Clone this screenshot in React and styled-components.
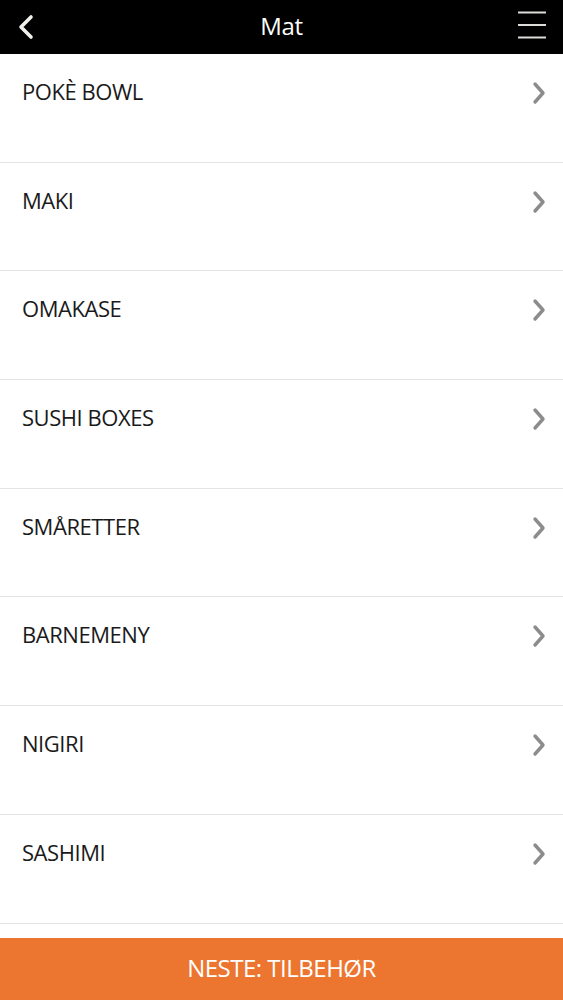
import React from "react";
import styled, { createGlobalStyle } from "styled-components";

const Global = createGlobalStyle`
  html, body { margin: 0; padding: 0; background: #fff; }
  body { font-family: "Open Sans", "Noto Sans", sans-serif; }
  * { box-sizing: border-box; }
`;

const Page = styled.div`
  width: 563px;
  height: 1000px;
  display: flex;
  flex-direction: column;
  overflow: hidden;
  background: #fff;
`;

const Header = styled.header`
  height: 54px;
  flex: 0 0 54px;
  background: #000;
  display: grid;
  grid-template-columns: 60px 1fr 60px;
  align-items: center;
`;

const Title = styled.h1`
  margin: 0;
  text-align: center;
  color: #fff;
  font-size: 24px;
  font-weight: 500;
  letter-spacing: -0.3px;
  padding-bottom: 3px;
`;

const IconButton = styled.button`
  background: none;
  border: 0;
  padding: 0;
  height: 54px;
  display: flex;
  align-items: center;
  justify-content: ${(p) => (p.$end ? "flex-end" : "flex-start")};
  padding-left: ${(p) => (p.$end ? "0" : "17px")};
  padding-right: ${(p) => (p.$end ? "16px" : "0")};
  padding-bottom: ${(p) => (p.$end ? "4px" : "0")};
`;

const List = styled.ul`
  list-style: none;
  margin: 0;
  padding: 0;
  flex: 1 1 auto;
  overflow: hidden;
`;

const Row = styled.li`
  height: 108.7px;
  flex: 0 0 auto;
  border-bottom: 1.5px solid #e4e4e4;
  display: flex;
  align-items: flex-start;
  justify-content: space-between;
  padding: 22px 16px 0 22px;
`;

const Label = styled.span`
  font-size: 22px;
  font-weight: 450;
  color: #1a1a1a;
  letter-spacing: -0.45px;
  line-height: 30px;
`;

const Footer = styled.button`
  flex: 0 0 62px;
  height: 62px;
  border: 0;
  background: #ec7530;
  color: #fff;
  font-family: "Open Sans", "Noto Sans", sans-serif;
  font-size: 24px;
  font-weight: 500;
  letter-spacing: -0.5px;
  display: flex;
  align-items: center;
  justify-content: center;
  padding: 0 0 4px;
`;

const Back = () => (
  <svg width="18" height="26" viewBox="0 0 18 26">
    <path d="M14 3 L4 13 L14 23" fill="none" stroke="#f2f0ea" strokeWidth="3.6" strokeLinecap="round" strokeLinejoin="round" />
  </svg>
);

const Burger = () => (
  <svg width="30" height="28" viewBox="0 0 30 28">
    <g stroke="#dcdcd8" strokeWidth="2">
      <line x1="1" y1="1.5" x2="29" y2="1.5" />
      <line x1="1" y1="14" x2="29" y2="14" />
      <line x1="1" y1="26.5" x2="29" y2="26.5" />
    </g>
  </svg>
);

const Chevron = () => (
  <svg width="16" height="24" viewBox="0 0 16 24" style={{ marginTop: 5 }}>
    <path d="M4 3 L12 12 L4 21" fill="none" stroke="#8c8c8c" strokeWidth="3.4" strokeLinecap="round" strokeLinejoin="round" />
  </svg>
);

const items = ["POKÈ BOWL", "MAKI", "OMAKASE", "SUSHI BOXES", "SMÅRETTER", "BARNEMENY", "NIGIRI", "SASHIMI"];

export default function App() {
  return (
    <Page>
      <Global />
      <Header>
        <IconButton aria-label="Tilbake"><Back /></IconButton>
        <Title>Mat</Title>
        <IconButton $end aria-label="Meny"><Burger /></IconButton>
      </Header>
      <List>
        {items.map((t) => (
          <Row key={t}>
            <Label>{t}</Label>
            <Chevron />
          </Row>
        ))}
        <Row aria-hidden="true" />
      </List>
      <Footer>NESTE: TILBEHØR</Footer>
    </Page>
  );
}
